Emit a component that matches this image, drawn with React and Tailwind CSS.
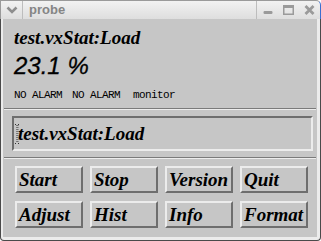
import React from "react";

const BUTTONS = ["Start", "Stop", "Version", "Quit", "Adjust", "Hist", "Info", "Format"];

const serif = { fontFamily: '"Liberation Serif", "Times New Roman", serif' };

function TkButton({ label }) {
  return (
    <div
      className="h-[27px] w-[68px] border-2 border-t-[#ececec] border-l-[#ececec] border-b-[#6e6e6e] border-r-[#6e6e6e] bg-[#c6c6c6] pl-[2px] flex items-center text-[19px] font-bold italic text-black leading-none whitespace-nowrap overflow-hidden"
      style={serif}
    >
      {label}
    </div>
  );
}

function Separator() {
  return <div className="h-[2px] border-t border-t-[#7a7a7a] border-b border-b-[#ececec]" />;
}

export default function App() {
  return (
    <div className="w-[321px] h-[241px] bg-white overflow-hidden flex flex-col" style={{ fontFamily: '"Liberation Sans", Arial, sans-serif' }}>
      {/* title bar */}
      <div className="h-[19px] flex items-stretch bg-gradient-to-b from-[#f2f2f2] to-[#dedede] border-t border-x border-[#9a9a9a] rounded-tr-[5px] border-r-[#3b6fd0]">
        <div className="w-[22px] flex items-center justify-center border-r border-[#bdbdbd]">
          <svg width="12" height="8" viewBox="0 0 12 8">
            <path d="M1.5 1.5 L6 6 L10.5 1.5" fill="none" stroke="#8e8e8e" strokeWidth="2.6" />
          </svg>
        </div>
        <div className="flex-1 pl-[6px] flex items-center text-[13px] font-bold text-[#858585]">probe</div>
        <div className="w-[64px] border-l border-[#bdbdbd] flex items-center gap-[10px] pl-[6px]">
          <svg width="10" height="10" viewBox="0 0 10 10">
            <rect x="0.5" y="6" width="9" height="3" rx="1.2" fill="#9a9a9a" />
          </svg>
          <svg width="11" height="10" viewBox="0 0 11 10">
            <rect x="0.75" y="0.75" width="9.5" height="8.5" fill="none" stroke="#9a9a9a" strokeWidth="1.5" />
            <rect x="0.5" y="0.5" width="10" height="2.5" fill="#9a9a9a" />
          </svg>
          <svg width="11" height="10" viewBox="0 0 11 10">
            <path d="M1.5 1 L9.5 9 M9.5 1 L1.5 9" stroke="#9a9a9a" strokeWidth="2.8" />
          </svg>
        </div>
      </div>

      {/* window body */}
      <div className="flex-1 border-l border-r border-b border-[#4a4a4a] rounded-b-[4px] bg-[#ececec] pl-[2px] pr-[3px] pb-[3px] flex">
        <div className="flex-1 bg-[#c6c6c6] pl-[1px] pr-[1px] flex flex-col">
          <div className="pl-[10px] pt-[8px]">
            <div className="text-[19px] leading-[22px] font-bold italic text-black" style={serif}>
              test.vxStat:Load
            </div>
            <div className="mt-[3px] text-[24px] leading-[28px] italic text-black [-webkit-text-stroke:0.3px_black]">23.1 %</div>
            <div className="mt-[9px] flex text-[11px] leading-[12px] tracking-[-0.6px] text-black" style={{ fontFamily: '"Liberation Mono", "Courier New", monospace' }}>
              <span>NO ALARM</span>
              <span className="ml-[10px]">NO ALARM</span>
              <span className="ml-[13px]">monitor</span>
            </div>
          </div>

          <div className="mt-[7px]">
            <Separator />
          </div>

          <div className="mt-[6px] ml-[8px] mr-[3px] h-[35px] border-2 border-t-[#6e6e6e] border-l-[#6e6e6e] border-b-[#ececec] border-r-[#ececec] flex items-center relative">
            <svg className="absolute left-[1px] top-[6px]" width="5" height="20" viewBox="0 0 5 20">
              <path d="M0 0.5 H2 M3 0.5 H5 M2 1 V19 M0 19.5 H2 M3 19.5 H5" stroke="#333" strokeWidth="1" strokeDasharray="1 1" />
              <path d="M3 1 V19" stroke="#666" strokeWidth="1" strokeDasharray="1 1" />
            </svg>
            <span className="pl-[4px] text-[19px] font-bold italic text-black leading-none" style={serif}>
              test.vxStat:Load
            </span>
          </div>

          <div className="mt-[6px]">
            <Separator />
          </div>

          <div className="mt-[7px] ml-[11px] grid grid-cols-[68px_68px_68px_68px] gap-x-[7px] gap-y-[8px]">
            {BUTTONS.map((b) => (
              <TkButton key={b} label={b} />
            ))}
          </div>
        </div>
      </div>
    </div>
  );
}
